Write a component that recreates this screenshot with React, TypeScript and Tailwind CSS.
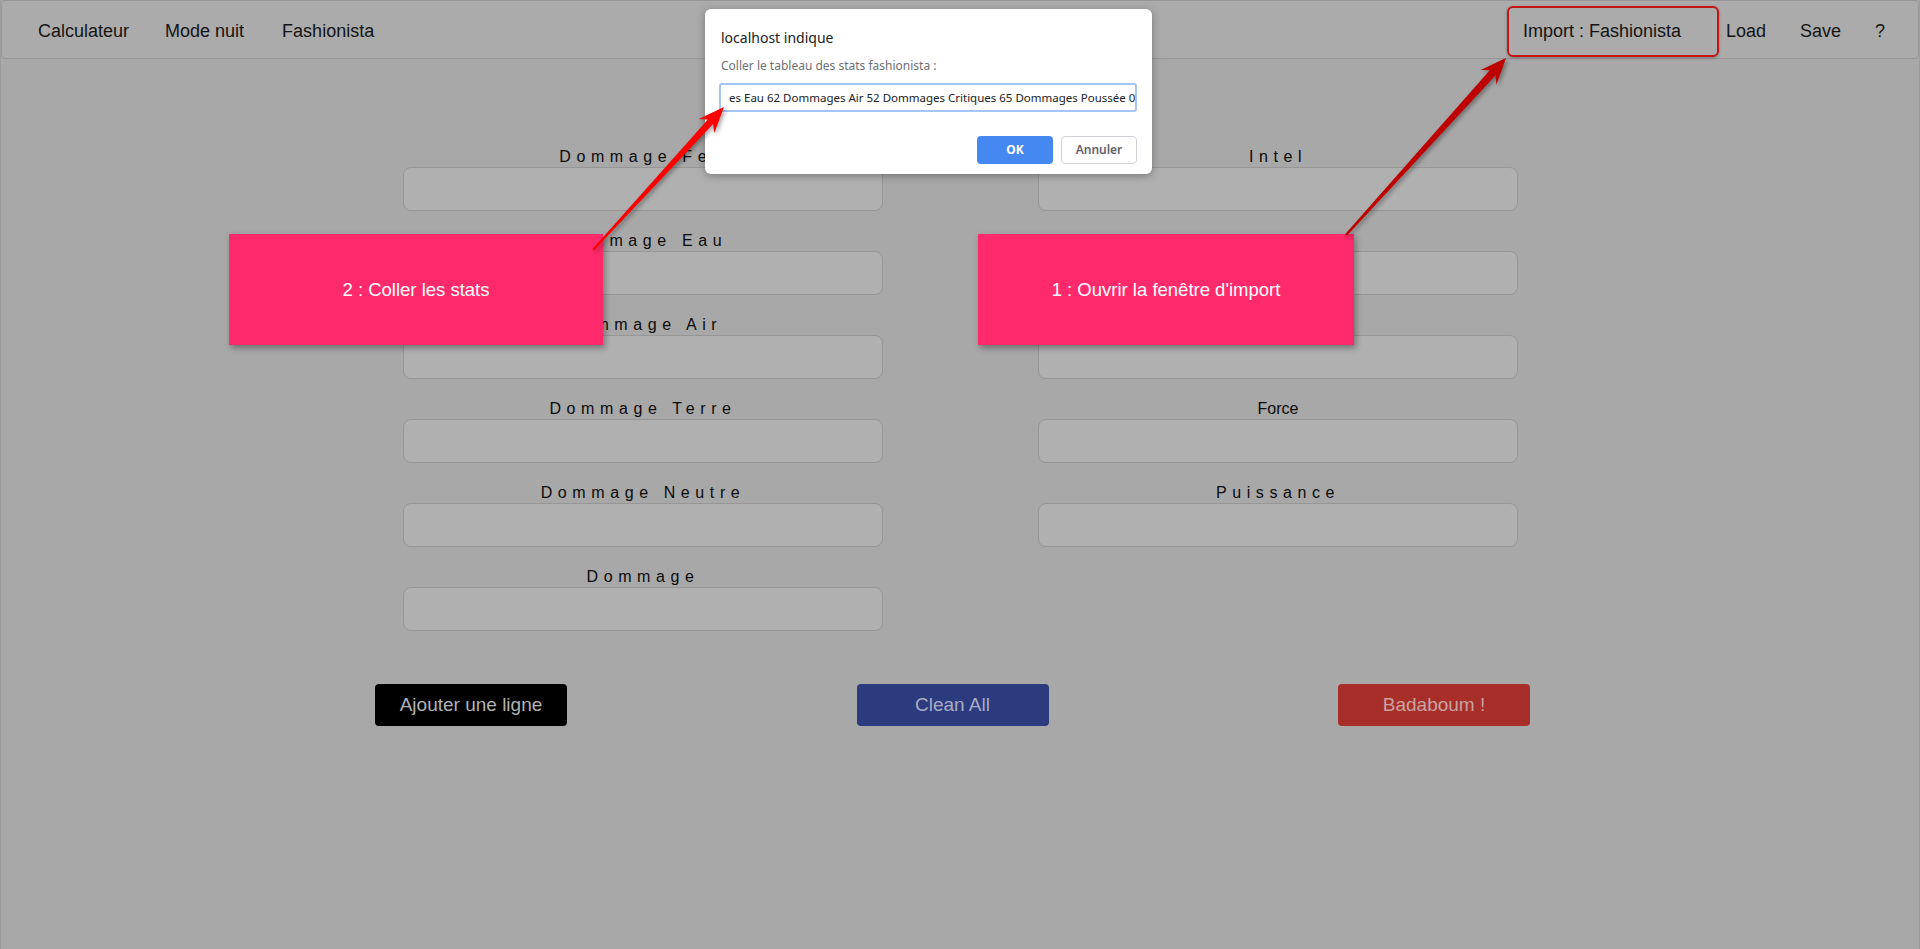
import React from 'react';

type Pt = [number, number];

// builds a tapered annotation arrow (thin tail, swept-back head)
function arrowPoints(tail: Pt, tip: Pt, head = 26, headW = 10.5, neck = 3.5, tailW = 1): string {
  const dx = tip[0] - tail[0];
  const dy = tip[1] - tail[1];
  const len = Math.hypot(dx, dy);
  const ux = dx / len;
  const uy = dy / len;
  const nx = -uy;
  const ny = ux;
  const at = (along: number, side: number) =>
    `${(tip[0] + ux * along + nx * side).toFixed(1)},${(tip[1] + uy * along + ny * side).toFixed(1)}`;
  return [
    at(0, 0),
    at(-head, headW),
    at(-head + 6, neck),
    at(-len, tailW),
    at(-len, -tailW),
    at(-head + 6, -neck),
    at(-head, -headW),
  ].join(' ');
}

const leftFields = ['Dommage Feu', 'Dommage Eau', 'Dommage Air', 'Dommage Terre', 'Dommage Neutre', 'Dommage'];
const rightFields = [
  { label: 'Intel', spaced: true },
  { label: 'Chance', spaced: true },
  { label: 'Agilité', spaced: true },
  { label: 'Force', spaced: false },
  { label: 'Puissance', spaced: true },
];

const Field: React.FC<{ label: string; spaced?: boolean }> = ({ label, spaced = true }) => (
  <div className="flex flex-col items-center">
    <div
      className={`h-[20px] text-[16px] leading-[20px] text-[#0b0b0b] ${spaced ? 'tracking-[5.6px]' : ''}`}
    >
      {label}
    </div>
    <div className="h-[44px] w-[480px] rounded-[8px] border border-[#969696] bg-[#b0b0b0]" />
  </div>
);

const App: React.FC = () => {
  return (
    <div className="relative h-[949px] w-full overflow-hidden border-x border-[#9c9c9c] bg-[#a8a8a8] font-['Liberation_Sans',Arial,sans-serif]">
      {/* Navbar */}
      <nav className="flex h-[59px] items-center justify-between rounded-[4px] border border-[#979797] bg-[#ababab] pt-[4px] text-[18px] text-[#141414]">
        <div className="flex items-center pl-[36px]">
          <span>Calculateur</span>
          <span className="ml-[36px]">Mode nuit</span>
          <span className="ml-[38px]">Fashionista</span>
        </div>
        <div className="flex items-center pr-[33px]">
          <div className="flex h-[51px] w-[212px] items-center rounded-[6px] border-2 border-[#c41414] pl-[14px] shadow-[0_1px_3px_rgba(0,0,0,0.3)]">
            Import : Fashionista
          </div>
          <span className="ml-[7px]">Load</span>
          <span className="ml-[34px]">Save</span>
          <span className="ml-[34px]">?</span>
        </div>
      </nav>

      {/* Form */}
      <div className="mt-[88px] flex items-start justify-center gap-[155px] pl-[1px]">
        <div className="flex flex-col gap-[20px]">
          {leftFields.map((f) => (
            <Field key={f} label={f} />
          ))}
        </div>
        <div className="flex flex-col gap-[20px]">
          {rightFields.map((f) => (
            <Field key={f.label} label={f.label} spaced={f.spaced} />
          ))}
        </div>
      </div>

      {/* Buttons */}
      <div className="ml-[374px] mt-[53px] flex w-[1155px] justify-between text-[19px] text-[#b2b2b2]">
        <button className="h-[42px] w-[192px] rounded-[4px] bg-black">Ajouter une ligne</button>
        <button className="h-[42px] w-[192px] rounded-[4px] bg-[#2c3a7e] text-[#a9abc6]">Clean All</button>
        <button className="h-[42px] w-[192px] rounded-[4px] bg-[#a82e29] text-[#c9a3a1]">Badaboum !</button>
      </div>

      {/* Annotation boxes */}
      <div className="absolute left-[228px] top-[234px] flex h-[111px] w-[374px] items-center justify-center bg-[#ff2a6b] text-[18.5px] text-white shadow-[2px_3px_6px_rgba(0,0,0,0.35)]">
        2 : Coller les stats
      </div>
      <div className="absolute left-[977px] top-[234px] flex h-[111px] w-[376px] items-center justify-center bg-[#ff2a6b] text-[18.5px] text-white shadow-[2px_3px_6px_rgba(0,0,0,0.35)]">
        1 : Ouvrir la fenêtre d'import
      </div>

      {/* Prompt dialog */}
      <div className="absolute left-[704px] top-[9px] h-[165px] w-[447px] rounded-[6px] bg-white pl-[14px] pr-[15px] pt-[19px] font-['Noto_Sans',Arial,sans-serif] shadow-[0_2px_8px_rgba(0,0,0,0.3)]">
        <div className="pl-[2px] text-[14px] leading-[20px] text-[#202124]">localhost indique</div>
        <div className="mt-[10px] pl-[2px] text-[12px] leading-[16px] text-[#6d6f73]">
          Coller le tableau des stats fashionista :
        </div>
        <div className="mt-[9px] flex h-[29px] w-[418px] items-center overflow-hidden whitespace-nowrap rounded-[3px] border-2 border-[#a6c5f7] pl-[8px] text-[11.5px] text-[#202124]">
          es Eau 62 Dommages Air 52 Dommages Critiques 65 Dommages Poussée 0
        </div>
        <div className="mt-[24px] flex justify-end gap-[8px]">
          <button className="h-[28px] w-[76px] rounded-[4px] bg-[#4688f1] text-[12px] font-bold text-white">OK</button>
          <button className="h-[28px] w-[76px] rounded-[4px] border border-[#cfd2d6] bg-white text-[12px] font-semibold text-[#5f6368]">
            Annuler
          </button>
        </div>
      </div>

      {/* Arrows */}
      <svg
        className="pointer-events-none absolute left-0 top-0 drop-shadow-[2px_2px_2px_rgba(0,0,0,0.35)]"
        width="1920"
        height="949"
        viewBox="0 0 1920 949"
      >
        <polygon points={arrowPoints([592, 250], [723, 107])} fill="#ff0000" />
        <polygon points={arrowPoints([1345, 235], [1505, 58], 26, 10.7, 3.8, 1.2)} fill="#bf0000" />
      </svg>
    </div>
  );
};

export default App;
